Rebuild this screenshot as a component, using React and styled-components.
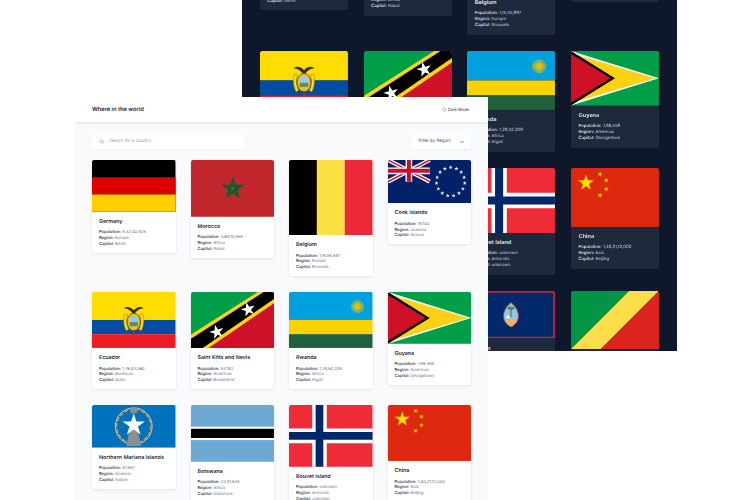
import React from 'react';
import styled, { createGlobalStyle } from 'styled-components';
import { ChevronDown, Moon, Search } from 'lucide-react';

const GlobalStyle = createGlobalStyle`
  html,
  body {
    margin: 0;
    background: #fff;
  }

  * {
    box-sizing: border-box;
  }
`;

// the reference is a downscaled mockup, so everything in it is slightly soft
const StyledCanvas = styled.div`
  position: relative;
  width: 748px;
  height: 500px;
  overflow: hidden;
  font-family: 'Inter', 'Liberation Sans', sans-serif;
  text-rendering: geometricPrecision;
  filter: blur(0.3px);
`;

// the two mockup windows sit on a free canvas; the dark one is the same page drawn a bit larger
const StyledWindow = styled.div`
  position: absolute;
  left: ${props => props.$left}px;
  top: ${props => props.$top}px;
  width: 413px;
  height: ${props => props.$height}px;
  zoom: ${props => props.$zoom};
  overflow: hidden;
  background: ${props => (props.$dark ? '#0f172a' : '#f9fafc')};
  color: ${props => (props.$dark ? '#e2e8f0' : '#1f2937')};
`;

const StyledHeader = styled.header`
  display: flex;
  align-items: center;
  justify-content: space-between;
  height: 25px;
  padding: 0 19px 0 17px;
  background: ${props => (props.$dark ? '#1e293b' : '#fff')};
  box-shadow: 0 1px 2px rgba(15, 23, 42, 0.1);

  h1 {
    margin: 0;
    font-size: 5.7px;
    font-weight: 600;
  }
`;

const StyledToggle = styled.div`
  display: flex;
  align-items: center;
  gap: 1.5px;
  font-size: 4px;
  font-weight: 500;
  color: ${props => (props.$dark ? '#e2e8f0' : '#4b5563')};
`;

const StyledMain = styled.main`
  padding: 12px 17px;
`;

const StyledControls = styled.div`
  display: flex;
  justify-content: space-between;
  margin-bottom: 11px;
`;

const StyledField = styled.div`
  display: flex;
  align-items: center;
  justify-content: ${props => (props.$select ? 'space-between' : 'flex-start')};
  width: ${props => (props.$select ? 59 : 152)}px;
  height: 15px;
  padding: ${props => (props.$select ? '0 6px 0 6.5px' : '0 0 0 7px')};
  gap: 5px;
  border-radius: 1.5px;
  background: ${props => (props.$dark ? '#1e293b' : '#fff')};
  box-shadow: 0 0.5px 2px rgba(15, 23, 42, 0.05);
  font-size: 4.4px;
  color: ${props => (props.$select ? (props.$dark ? '#e2e8f0' : '#4b5563') : '#9ca3af')};
`;

const StyledGrid = styled.div`
  display: grid;
  grid-template-columns: repeat(4, 83.5px);
  justify-content: space-between;
  align-items: start;
  row-gap: ${props => (props.$dark ? 15.2 : 16)}px;
`;

const StyledCard = styled.article`
  overflow: hidden;
  border-radius: 2px;
  background: ${props => (props.$dark ? '#1e293b' : '#fff')};
  box-shadow: ${props => (props.$dark ? 'none' : '0 1px 3px rgba(15, 23, 42, 0.1)')};

  svg {
    display: block;
    width: 100%;
    height: auto;
  }
`;

const StyledBody = styled.div`
  padding: 7px 7px ${props => (props.$dark ? 5.3 : 6.4)}px;

  h2 {
    margin: 0 0 3.5px;
    font-size: 5.3px;
    font-weight: 600;
    line-height: 7px;
    white-space: nowrap;
  }

  p {
    margin: 0;
    font-size: 4.1px;
    line-height: 5.7px;
    color: ${props => (props.$dark ? '#cbd5e1' : '#6b7280')};
    white-space: nowrap;
  }

  b {
    font-weight: 500;
    color: ${props => (props.$dark ? '#e2e8f0' : '#1f2937')};
  }
`;

const starPoints = (cx, cy, r, rot = 0) => {
  const points = [];
  for (let i = 0; i < 10; i++) {
    const radius = i % 2 ? r * 0.382 : r;
    const angle = ((i * 36 + rot - 90) * Math.PI) / 180;
    points.push(`${(cx + radius * Math.cos(angle)).toFixed(2)},${(cy + radius * Math.sin(angle)).toFixed(2)}`);
  }
  return points.join(' ');
};

const Flag = ({ h, children }) => <svg viewBox={`0 0 100 ${h}`}>{children}</svg>;

const Germany = () => (
  <Flag h={62}>
    <rect width="100" height="62" fill="#000" />
    <rect y="20.7" width="100" height="20.7" fill="#dd0000" />
    <rect y="41.3" width="100" height="20.7" fill="#ffce00" />
  </Flag>
);

const Morocco = () => (
  <Flag h={68}>
    <rect width="100" height="68" fill="#c1272d" />
    <polygon
      points="50,23.5 56.3,42.7 39.8,30.8 60.2,30.8 43.7,42.7"
      fill="none"
      stroke="#006233"
      strokeWidth="2.4"
    />
  </Flag>
);

const Belgium = () => (
  <Flag h={90}>
    <rect width="33.4" height="90" fill="#000" />
    <rect x="33.4" width="33.3" height="90" fill="#fae042" />
    <rect x="66.7" width="33.3" height="90" fill="#ed2939" />
  </Flag>
);

const CookIslands = () => {
  const stars = Array.from({ length: 15 }, (_, i) => {
    const angle = (i * 24 * Math.PI) / 180;
    return starPoints(75 + 17 * Math.sin(angle), 26 - 17 * Math.cos(angle), 2.6);
  });
  return (
    <Flag h={52}>
      <rect width="100" height="52" fill="#012169" />
      <path d="M0 0L50 26M50 0L0 26" stroke="#fff" strokeWidth="5" />
      <path d="M0 0L50 26M50 0L0 26" stroke="#c8102e" strokeWidth="1.8" />
      <path d="M25 0V26M0 13H50" stroke="#fff" strokeWidth="8" />
      <path d="M25 0V26M0 13H50" stroke="#c8102e" strokeWidth="4.8" />
      {stars.map((points, i) => (
        <polygon key={i} points={points} fill="#fff" />
      ))}
    </Flag>
  );
};

const Ecuador = () => (
  <Flag h={67}>
    <rect width="100" height="33.5" fill="#ffdd00" />
    <rect y="33.5" width="100" height="17" fill="#034ea2" />
    <rect y="50.5" width="100" height="16.5" fill="#ed1c24" />
    <path d="M38 19.5C42 16.5 47 18 50 22C53 18 58 16.5 62 19.5C57 20 54 22 51.5 25.5H48.5C46 22 43 20 38 19.5Z" fill="#3b3024" />
    <path d="M39.5 26C37 32 37.5 40 41 46.5L44 45C41.5 40 41 33 42.5 27Z" fill="#ffdd00" stroke="#5a6a3a" strokeWidth="0.5" />
    <path d="M60.5 26C63 32 62.5 40 59 46.5L56 45C58.5 40 59 33 57.5 27Z" fill="#ffdd00" stroke="#5a6a3a" strokeWidth="0.5" />
    <ellipse cx="50" cy="36" rx="8" ry="10.5" fill="#e8c21a" stroke="#7d2b3a" strokeWidth="1" />
    <ellipse cx="50" cy="34.5" rx="5.5" ry="7" fill="#9cc9dd" />
    <rect x="45" y="36" width="10" height="5" rx="1.5" fill="#5b8e6a" />
    <rect x="49.2" y="46" width="1.6" height="7" fill="#a83232" />
  </Flag>
);

const StKitts = () => (
  <Flag h={67}>
    <polygon points="0,0 100,0 0,67" fill="#009e49" />
    <polygon points="100,0 100,67 0,67" fill="#ce1126" />
    <polygon points="0,51 80,0 100,0 100,13 21,67 0,67" fill="#fcd116" />
    <polygon points="0,56 87,0 100,0 100,8 14,67 0,67" fill="#000" />
    <polygon points={starPoints(68.5, 21, 9, -15)} fill="#fff" />
    <polygon points={starPoints(31, 48, 9, -15)} fill="#fff" />
  </Flag>
);

const Rwanda = () => {
  const rays = Array.from({ length: 24 }, (_, i) => (i * 15 * Math.PI) / 180);
  return (
    <Flag h={67}>
      <rect width="100" height="33.5" fill="#00a1de" />
      <rect y="33.5" width="100" height="17" fill="#fad201" />
      <rect y="50.5" width="100" height="16.5" fill="#20603d" />
      {rays.map((angle, i) => (
        <line
          key={i}
          x1="82"
          y1="17.5"
          x2={82 + 8 * Math.cos(angle)}
          y2={17.5 + 8 * Math.sin(angle)}
          stroke="#e5be01"
          strokeWidth="1"
        />
      ))}
      <circle cx="82" cy="17.5" r="3.5" fill="#e5be01" />
    </Flag>
  );
};

const Guyana = () => (
  <Flag h={62}>
    <rect width="100" height="62" fill="#009e49" />
    <polygon points="0,0 100,31 0,62" fill="#fff" />
    <polygon points="0,2.5 96,31 0,59.5" fill="#fcd116" />
    <polygon points="0,0 50,31 0,62" fill="#000" />
    <polygon points="0,3.5 45,31 0,58.5" fill="#ce1126" />
  </Flag>
);

const MarianaIslands = () => (
  <Flag h={51}>
    <rect width="100" height="51" fill="#0071bc" />
    <circle cx="50" cy="25.5" r="22" fill="none" stroke="#e8e6df" strokeWidth="1" />
    <circle cx="50" cy="25.5" r="20.5" fill="none" stroke="#c8963c" strokeWidth="2" strokeDasharray="5 2" />
    <path d="M45 4H55L53.5 10H46.5Z" fill="#8b8d8e" />
    <path d="M45 30H55L59 49H41Z" fill="#8b8d8e" />
    <polygon points={starPoints(50, 24, 14)} fill="#fff" />
  </Flag>
);

const Botswana = () => (
  <Flag h={68}>
    <rect width="100" height="68" fill="#6da9d2" />
    <rect y="26" width="100" height="16" fill="#fff" />
    <rect y="28.5" width="100" height="11" fill="#000" />
  </Flag>
);

const Bouvet = () => (
  <Flag h={74}>
    <rect width="100" height="74" fill="#ef2b37" />
    <path d="M36.5 0V74M0 37H100" stroke="#fff" strokeWidth="17.5" />
    <path d="M36.5 0V74M0 37H100" stroke="#002868" strokeWidth="9.2" />
  </Flag>
);

const China = () => (
  <Flag h={67}>
    <rect width="100" height="67" fill="#de2910" />
    <polygon points={starPoints(17, 17, 9.5)} fill="#ffde00" />
    <polygon points={starPoints(33, 7, 3, 20)} fill="#ffde00" />
    <polygon points={starPoints(40, 14, 3, 45)} fill="#ffde00" />
    <polygon points={starPoints(40, 24, 3, 0)} fill="#ffde00" />
    <polygon points={starPoints(33, 31, 3, 20)} fill="#ffde00" />
  </Flag>
);

const Guam = () => (
  <Flag h={54}>
    <rect width="100" height="54" fill="#c62139" />
    <rect x="2" y="2" width="96" height="50" fill="#00296b" />
    <path d="M50 13C57 19 59 25 58.5 30C58 35 54 39 50 41C46 39 42 35 41.5 30C41 25 43 19 50 13Z" fill="#8fc7e8" stroke="#c62139" strokeWidth="1" />
    <rect x="49.4" y="19" width="1.2" height="11" fill="#7a5a34" />
    <ellipse cx="50" cy="19.5" rx="4" ry="1.8" fill="#3f8f3c" />
    <path d="M43 33H57C56 36 53 39 50 40.5C47 39 44 36 43 33Z" fill="#e3b866" />
    <rect x="45" y="28" width="3" height="3" fill="#fff" />
  </Flag>
);

const Congo = () => (
  <Flag h={66}>
    <polygon points="0,0 66,0 0,66" fill="#009543" />
    <polygon points="66,0 100,0 34,66 0,66" fill="#fbde4a" />
    <polygon points="100,0 100,66 34,66" fill="#dc241f" />
  </Flag>
);

const countries = [
  { name: 'Germany', population: '8,32,40,525', region: 'Europe', capital: 'Berlin', flag: Germany },
  { name: 'Morocco', population: '3,69,10,558', region: 'Africa', capital: 'Rabat', flag: Morocco },
  { name: 'Belgium', population: '1,15,55,997', region: 'Europe', capital: 'Brussels', flag: Belgium },
  { name: 'Cook Islands', population: '18,100', region: 'Oceania', capital: 'Avarua', flag: CookIslands },
  { name: 'Ecuador', population: '1,76,43,060', region: 'Americas', capital: 'Quito', flag: Ecuador },
  { name: 'Saint Kitts and Nevis', population: '53,192', region: 'Americas', capital: 'Basseterre', flag: StKitts },
  { name: 'Rwanda', population: '1,29,52,209', region: 'Africa', capital: 'Kigali', flag: Rwanda },
  { name: 'Guyana', population: '7,86,559', region: 'Americas', capital: 'Georgetown', flag: Guyana },
  { name: 'Northern Mariana Islands', population: '57,557', region: 'Oceania', capital: 'Saipan', flag: MarianaIslands },
  { name: 'Botswana', population: '23,51,625', region: 'Africa', capital: 'Gaborone', flag: Botswana },
  { name: 'Bouvet Island', population: 'unknown', region: 'Antarctic', capital: 'unknown', flag: Bouvet },
  { name: 'China', population: '1,40,21,12,000', region: 'Asia', capital: 'Beijing', flag: China },
];

// the dark page has one more visible row, its first two cards lie behind the light page
const darkCountries = [
  ...countries,
  { name: 'Fiji', population: '8,96,444', region: 'Oceania', capital: 'Suva', flag: Guam },
  { name: 'Tonga', population: '1,05,697', region: 'Oceania', capital: "Nuku'alofa", flag: Guam },
  { name: 'Guam', population: '1,68,783', region: 'Oceania', capital: 'Hagåtña', flag: Guam },
  { name: 'Congo', population: '55,18,092', region: 'Africa', capital: 'Brazzaville', flag: Congo },
];

const Card = ({ country, dark }) => {
  const FlagImage = country.flag;
  return (
    <StyledCard $dark={dark}>
      <FlagImage />
      <StyledBody $dark={dark}>
        <h2>{country.name}</h2>
        <p><b>Population:</b> {country.population}</p>
        <p><b>Region:</b> {country.region}</p>
        <p><b>Capital:</b> {country.capital}</p>
      </StyledBody>
    </StyledCard>
  );
};

const Page = ({ dark, items, ...rest }) => (
  <StyledWindow $dark={dark} {...rest}>
    <StyledHeader $dark={dark}>
      <h1>Where in the world</h1>
      <StyledToggle $dark={dark}>
        <Moon size={5} strokeWidth={1.5} />
        Dark Mode
      </StyledToggle>
    </StyledHeader>
    <StyledMain>
      <StyledControls>
        <StyledField $dark={dark}>
          <Search size={5} strokeWidth={1.8} color="#6b7280" />
          Search for a country
        </StyledField>
        <StyledField $dark={dark} $select>
          Filter by Region
          <ChevronDown size={6} strokeWidth={2} color={dark ? '#e2e8f0' : '#111827'} />
        </StyledField>
      </StyledControls>
      <StyledGrid $dark={dark}>
        {items.map(country => (
          <Card key={country.name} country={country} dark={dark} />
        ))}
      </StyledGrid>
    </StyledMain>
  </StyledWindow>
);

const App = () => (
  <>
    <GlobalStyle />
    <StyledCanvas>
      <Page dark items={darkCountries} $left={229.8} $top={-144.7} $height={477.5} $zoom={1.0533} />
      <Page items={countries} $left={75} $top={97} $height={403} $zoom={1} />
    </StyledCanvas>
  </>
);

export default App;
